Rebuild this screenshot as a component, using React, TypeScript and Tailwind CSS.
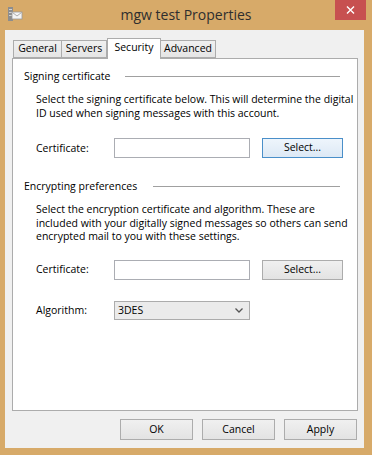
import React from "react";

const font = { fontFamily: '"Open Sans", "Noto Sans", sans-serif' };

function WinButton({ label, focused = false, className = "" }: { label: string; focused?: boolean; className?: string }) {
  return (
    <button
      className={
        "flex items-center justify-center border text-[10.5px] text-black " +
        (focused
          ? "border-[#4a8fc9] bg-gradient-to-b from-[#eef5fc] to-[#dde9f5] "
          : "border-[#acacac] bg-gradient-to-b from-[#f0f0f0] to-[#e3e3e3] ") +
        className
      }
    >
      {label}
    </button>
  );
}

function SectionTitle({ label, width }: { label: string; width: string }) {
  return (
    <div className="flex h-[13px] items-center pl-[11px] pr-[17px]">
      <span className={"shrink-0 leading-[13px] " + width}>{label}</span>
      <div className="h-px flex-1 bg-[#a0a0a0]" />
    </div>
  );
}

function CertRow({ focused = false, className = "" }: { focused?: boolean; className?: string }) {
  return (
    <div className={"flex h-[20px] items-center pl-[23px] " + className}>
      <span className="w-[78px] leading-[13px]">Certificate:</span>
      <div className="h-[20px] w-[136px] border border-[#abadb3] bg-white" />
      <WinButton label="Select..." focused={focused} className="ml-[12px] h-[20px] w-[81px]" />
    </div>
  );
}

const tabs = ["General", "Servers", "Security", "Advanced"];
const tabWidths = ["w-[49px]", "w-[46px]", "w-[54px]", "w-[56px]"];

export default function App() {
  return (
    <div className="flex h-[455px] w-[372px] flex-col bg-[#d7aa69] text-black" style={font}>
      {/* title bar */}
      <div className="relative flex h-[30px] shrink-0 items-center">
        <svg className="absolute left-[7px] top-[7px]" width="16" height="15" viewBox="0 0 16 15">
          <rect x="1" y="0" width="5" height="14" fill="#8d8d8d" />
          <rect x="2" y="2" width="3" height="1" fill="#d0d0d0" />
          <rect x="2" y="5" width="3" height="1" fill="#d0d0d0" />
          <rect x="2" y="8" width="3" height="1" fill="#d0d0d0" />
          <rect x="5" y="5" width="10" height="7" fill="#f4f4f4" stroke="#9a9a9a" strokeWidth="0.8" />
          <path d="M5.5 5.5 L10 9 L14.5 5.5" fill="none" stroke="#9a9a9a" strokeWidth="0.8" />
        </svg>
        <div className="w-full text-center text-[14px] leading-[30px] text-[#2e2e2e]">mgw test Properties</div>
        <div className="absolute right-[6px] top-0 flex h-[20px] w-[31px] items-center justify-center bg-[#c75050]">
          <svg width="9" height="8" viewBox="0 0 9 8">
            <path d="M1 0.5 L8 7.5 M8 0.5 L1 7.5" stroke="white" strokeWidth="1.4" />
          </svg>
        </div>
      </div>

      {/* client area */}
      <div className="ml-[5px] flex h-[418px] w-[359px] flex-col bg-[#f0f0f0] px-[7px] pt-[7px] text-[10.5px]">
        {/* tabs */}
        <div className="relative z-10 flex h-[21px] items-end pl-[1px]">
          {tabs.map((t, i) =>
            t === "Security" ? (
              <div
                key={t}
                className={"-mb-px flex h-[21px] items-start justify-center border border-b-0 border-[#acacac] bg-white pt-[1px] " + tabWidths[i]}
              >
                {t}
              </div>
            ) : (
              <div
                key={t}
                className={
                  "flex h-[18px] items-center justify-center border border-[#acacac] bg-gradient-to-b from-[#f0f0f0] to-[#e5e5e5] " +
                  (i > 0 ? "-ml-px " : "") +
                  (i === 3 ? "-ml-px " : "") +
                  tabWidths[i]
                }
              >
                {t}
              </div>
            )
          )}
        </div>

        {/* panel */}
        <div className="flex h-[353px] w-[346px] flex-col border border-[#acacac] bg-white pt-[11px]">
          <SectionTitle label="Signing certificate" width="w-[101px]" />
          <p className="mt-[10px] pl-[23px] leading-[13.5px] whitespace-nowrap">
            Select the signing certificate below. This will determine the digital
            <br />
            ID used when signing messages with this account.
          </p>
          <CertRow focused className="mt-[18px]" />

          <div className="mt-[22px]">
            <SectionTitle label="Encrypting preferences" width="w-[129px]" />
          </div>
          <p className="mt-[10px] pl-[23px] leading-[13.5px] whitespace-nowrap">
            Select the encryption certificate and algorithm. These are
            <br />
            included with your digitally signed messages so others can send
            <br />
            encrypted mail to you with these settings.
          </p>
          <CertRow className="mt-[16px]" />

          <div className="mt-[21px] flex h-[19px] items-center pl-[23px]">
            <span className="w-[78px] leading-[13px]">Algorithm:</span>
            <div className="flex h-[19px] w-[136px] items-center justify-between border border-[#acacac] bg-[#ebebeb] pl-[3px] pr-[6px]">
              <span className="leading-[13px]">3DES</span>
              <svg width="8" height="5" viewBox="0 0 8 5">
                <path d="M0.5 0.5 L4 4 L7.5 0.5" fill="none" stroke="#555" strokeWidth="1.3" />
              </svg>
            </div>
          </div>
        </div>

        {/* dialog buttons */}
        <div className="mt-[8px] flex justify-end gap-[9px] pr-[0px]">
          <WinButton label="OK" className="h-[21px] w-[73px]" />
          <WinButton label="Cancel" className="h-[21px] w-[73px]" />
          <WinButton label="Apply" className="h-[21px] w-[73px]" />
        </div>
      </div>
    </div>
  );
}
